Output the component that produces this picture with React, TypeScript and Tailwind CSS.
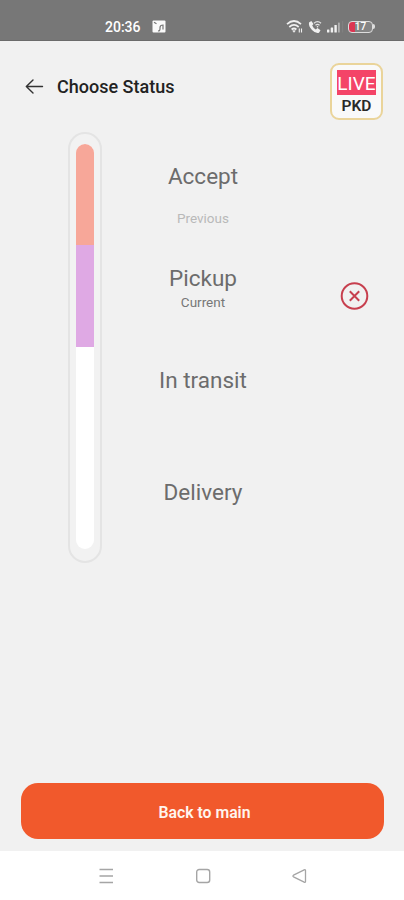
const StatusBar = () => (
  <div className="flex h-[41px] shrink-0 items-center border-b border-[#6b6b6b] bg-[#777777] pt-[13px] pl-[105px] text-white">
    <span className="w-9 text-[14px] leading-4 font-medium whitespace-nowrap">20:36</span>
    <svg className="ml-[11px] h-[13px] w-[14px]" viewBox="0 0 14 13">
      <rect x="0.5" y="0.5" width="13" height="12" rx="1" fill="#fafafa" />
      <path d="M2 2.200l2.500 1.600M6 10.800q2 .4 2-2V7.500q0-2.500 3-2.500M11 4.500v5" fill="none" stroke="#777777" strokeWidth="1.200" />
    </svg>
    <svg className="ml-[120px] h-[15px] w-[18px]" viewBox="0 0 18 15" fill="none" stroke="#f0f0f0" strokeWidth="1.700">
      <path d="M1 5.200q7-6.400 14 0M3.300 8q4.700-4.200 9.400 0M5.600 10.500q2.400-2 4.800 0" />
      <path d="M6.800 11.800h2.400L8 13.300z" fill="#f0f0f0" strokeWidth="0.800" />
      <path d="M13.300 9.500v4M15.500 9.500v4" strokeWidth="1.100" />
    </svg>
    <svg className="ml-[4px] h-[14px] w-[14px]" viewBox="0 0 14 14" fill="none">
      <path d="M1 2.500L3.300 1l2.200 3-1.300 1.600q1 2.600 3.600 3.800L9.500 8l3 2.200L11 12.800Q7.500 13.800 4 10 .3 6 1 2.500z" fill="#f0f0f0" />
      <path d="M6 3.200q3.500-3 7 0M7.500 5.200q2-1.600 4 0" stroke="#e2e2e2" strokeWidth="1.300" />
      <circle cx="9.500" cy="6.700" r="0.800" fill="#f0f0f0" />
    </svg>
    <svg className="ml-[5px] h-[12px] w-[17px]" viewBox="0 0 17 12" fill="#f0f0f0">
      <rect x="0" y="8.500" width="2.400" height="3" rx="0.500" />
      <rect x="3.700" y="6.500" width="2.400" height="5" rx="0.500" />
      <rect x="7.400" y="4" width="2.400" height="7.500" rx="0.500" />
      <rect x="11" y="1.500" width="1.800" height="10" rx="0.500" fill="#b0b0b0" />
      <rect x="15.500" y="0" width="0.600" height="11.500" fill="#898989" />
    </svg>
    <div className="ml-[4px] flex h-[12px] w-[25px] items-center justify-center rounded-[4px] border-[1.5px] border-[#dddddd] bg-linear-to-r from-[#dc3552] from-25% to-[#858585] to-25% text-[10px] leading-none font-medium">
      17
    </div>
    <div className="h-[5px] w-[1.5px] rounded-r bg-[#dddddd]" />
  </div>
);

const Header = () => (
  <header className="flex h-[91px] shrink-0 items-start justify-between pr-[21px] pl-[25px]">
    <div className="flex items-center pt-[34px]">
      <svg className="h-6 w-[19px]" viewBox="0 0 19 24" fill="none" stroke="#333333" strokeWidth="1.400" strokeLinecap="round" strokeLinejoin="round">
        <path d="M17.500 11.500H1.300M8 5L1.300 11.500 8 18" />
      </svg>
      <h1 className="ml-[13px] text-[18px] leading-6 font-medium whitespace-nowrap text-[#222222]">Choose Status</h1>
    </div>
    <div className="mt-[22px] flex h-[57px] w-[53px] flex-col items-center rounded-[9px] border-2 border-[#ead49a] bg-[#f9f9f9] pt-[5px]">
      <div className="flex h-[25px] w-[39px] items-center justify-center bg-[#f44468] pt-px text-[19px] leading-none text-white">LIVE</div>
      <div className="mt-[2px] text-[15.5px] leading-[18px] font-semibold text-[#292929]">PKD</div>
    </div>
  </header>
);

export default function App() {
  return (
    <div className="flex h-[900px] w-[404px] flex-col overflow-hidden bg-[#f1f1f1] font-['Roboto','Liberation_Sans',sans-serif]">
      <StatusBar />
      <Header />
      <main className="flex flex-1 items-start pl-[68px]">
        <div className="h-[431px] w-[34px] rounded-full border-2 border-[#e4e4e4] bg-[#f2f2f2] px-[6px] pt-[10px] pb-[12px]">
          <div className="flex h-full flex-col overflow-hidden rounded-full bg-white">
            <div className="h-[101px] bg-[#f7a799]" />
            <div className="h-[102px] bg-[#dfa9e4]" />
          </div>
        </div>
        <div className="flex w-[202px] flex-col items-center pt-[30px] text-[#6c6c6c]">
          <div className="text-[22.5px] leading-7">Accept</div>
          <div className="mt-[20px] text-[13.5px] leading-4 text-[#b9b9b9]">Previous</div>
          <div className="mt-[38px] text-[22.5px] leading-7">Pickup</div>
          <div className="mt-[2px] text-[13.5px] leading-4 text-[#777777]">Current</div>
          <div className="mt-[56px] text-[22.5px] leading-7">In transit</div>
          <div className="mt-[84px] text-[22.5px] leading-7">Delivery</div>
        </div>
        <svg className="mt-[149px] ml-[36px] h-[30px] w-[29px]" viewBox="0 0 29 30" fill="none" stroke="#c73f4e" strokeWidth="2">
          <circle cx="14.500" cy="15" r="12.800" />
          <path d="M9.800 10.300l9.400 9.400M19.200 10.300l-9.400 9.400" />
        </svg>
      </main>
      <div className="shrink-0 pr-5 pb-3 pl-[21px]">
        <button className="h-[56px] w-full rounded-[17px] bg-[#f1592c] pt-[3px] pl-1 text-[15.8px] font-semibold text-[#fff5ef]">Back to main</button>
      </div>
      <nav className="flex h-[49px] shrink-0 items-center justify-between bg-white pr-[97px] pb-0 pl-[98px]">
        <svg className="h-4 w-4" viewBox="0 0 16 16" stroke="#a5a5a5" strokeWidth="1.400">
          <path d="M1.500 1.500h13.500M1.500 8h13.500M1.500 14.500h13.500" />
        </svg>
        <svg className="h-4 w-4" viewBox="0 0 16 16" fill="none" stroke="#a5a5a5" strokeWidth="1.400">
          <rect x="1.700" y="1.500" width="13" height="13" rx="2.500" />
        </svg>
        <svg className="h-4 w-4" viewBox="0 0 16 16" fill="none" stroke="#a5a5a5" strokeWidth="1.300" strokeLinejoin="round">
          <path d="M2.500 7.200L13.200 1.800q1.300-.5 1.300.8v10.800q0 1.300-1.300.8L2.500 8.800q-1.200-.8 0-1.600z" />
        </svg>
      </nav>
    </div>
  );
}
